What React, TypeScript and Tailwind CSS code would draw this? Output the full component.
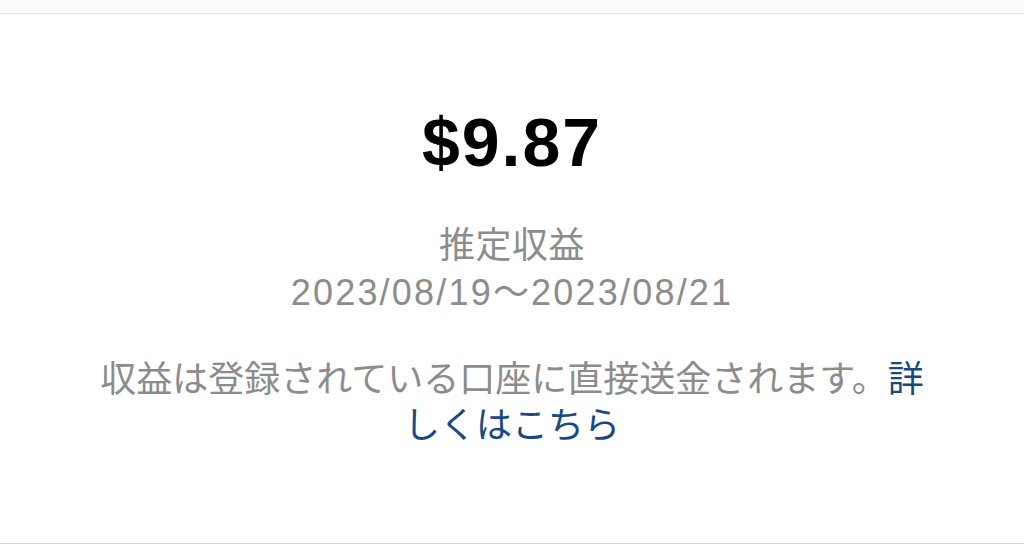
export default function App() {
  const font = { fontFamily: '"Liberation Sans", "Noto Sans CJK JP", sans-serif' };
  return (
    <div className="w-[1024px] h-[554px] bg-white flex flex-col" style={font}>
      <div className="h-[13px] bg-[#fbfbfb]" />
      <div className="flex-1 border-t border-b border-t-[#e3e3e3] border-b-[#d4d4d4] flex flex-col items-center px-[96px]">
        <div className="mt-[94px] text-[68px] leading-[68px] font-bold text-black tracking-[2px]">$9.87</div>
        <div className="mt-[46px] text-[36px] leading-[47px] text-[#8c8c8c] tracking-[0.5px]">推定収益</div>
        <div className="text-[36px] leading-[47px] text-[#8c8c8c] tracking-[2.2px]">2023/08/19〜2023/08/21</div>
        <div className="mt-[41px] text-[36px] leading-[46px] text-[#8c8c8c] text-center">
          収益は登録されている口座に直接送金されます。<span className="text-[#174a85]">詳しくはこちら</span>
        </div>
      </div>
      <div className="h-[10px]" />
    </div>
  );
}
